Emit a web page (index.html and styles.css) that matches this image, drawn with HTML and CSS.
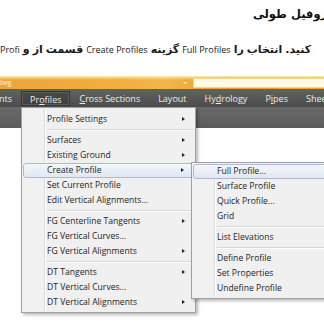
FILE: index.html
```html
<!DOCTYPE html>
<html lang="fa">
<head>
<meta charset="utf-8">
<link rel="stylesheet" href="styles.css">
</head>
<body>
<div class="doc">
  <div class="heading"><span>پروفیل طولی</span></div>
  <div class="instr">
    <span class="en">Profi</span>
    <span class="fa">و</span>
    <span class="fa">از</span>
    <span class="fa">قسمت</span>
    <span class="en">Create Profiles</span>
    <span class="fa">گزینه</span>
    <span class="en">Full Profiles</span>
    <span class="fa">را</span>
    <span class="fa">انتخاب</span>
    <span class="fa">کنید.</span>
  </div>
</div>
<div class="app">
  <div class="titlebar">
    <span class="tb-name">Drawing1.dwg</span>
    <span class="tb-arrow"></span>
    <div class="tb-box"></div>
  </div>
  <div class="menubar">
    <span class="mi first">Alignments</span>
    <span class="mi active">Pr<u>o</u>files</span>
    <span class="mi"><u>C</u>ross Sections</span>
    <span class="mi">Layout</span>
    <span class="mi">Hy<u>d</u>rology</span>
    <span class="mi">P<u>i</u>pes</span>
    <span class="mi">Sheets</span>
  </div>
  <div class="ribbon"></div>

  <div class="menu main">
    <div class="item sm">Profile Settings</div>
    <div class="sep"></div>
    <div class="item sm">Surfaces</div>
    <div class="item sm">Existing Ground</div>
    <div class="item sm hl">Create Profile</div>
    <div class="item">Set Current Profile</div>
    <div class="item">Edit Vertical Alignments...</div>
    <div class="sep"></div>
    <div class="item sm">FG Centerline Tangents</div>
    <div class="item">FG Vertical Curves...</div>
    <div class="item sm">FG Vertical Alignments</div>
    <div class="sep"></div>
    <div class="item sm">DT Tangents</div>
    <div class="item">DT Vertical Curves...</div>
    <div class="item sm">DT Vertical Alignments</div>
  </div>

  <div class="menu sub">
    <div class="item hl">Full Profile...</div>
    <div class="item">Surface Profile</div>
    <div class="item">Quick Profile...</div>
    <div class="item">Grid</div>
    <div class="sep"></div>
    <div class="item">List Elevations</div>
    <div class="sep"></div>
    <div class="item">Define Profile</div>
    <div class="item">Set Properties</div>
    <div class="item">Undefine Profile</div>
  </div>
</div>
</body>
</html>
```

FILE: styles.css
```css
html, body {
  margin: 0;
  padding: 0;
  background: #ffffff;
  overflow: hidden;
  width: 324px;
  height: 324px;
}

.doc {
  font-family: "Open Sans", "DejaVu Sans", sans-serif;
  color: #111;
}

.heading {
  display: flex;
  justify-content: flex-start;
  margin-top: 6px;
  margin-right: -8px;
  height: 17px;
  line-height: 17px;
  direction: rtl;
  font-family: "DejaVu Sans", sans-serif;
  font-weight: bold;
  font-size: 11.5px;
  white-space: nowrap;
}

.instr {
  display: flex;
  align-items: baseline;
  gap: 3px;
  margin-top: 19px;
  height: 16px;
  line-height: 16px;
  white-space: nowrap;
  color: #1a1a1a;
}
.instr .en {
  flex: none;
  font-family: "Open Sans", sans-serif;
  font-size: 9px;
}
.instr .fa {
  flex: none;
  direction: rtl;
  font-family: "DejaVu Sans", sans-serif;
  font-weight: bold;
  font-size: 11px;
}

.app {
  position: relative;
  margin-top: 18px;
  font-family: "Open Sans", sans-serif;
}

.titlebar {
  display: flex;
  align-items: center;
  height: 13px;
  background:
    linear-gradient(to bottom, rgba(255,240,190,0.9) 0, rgba(255,240,190,0) 4px),
    linear-gradient(to right, #eea43a 0, #f1ae3e 35%, #f3b64a 50%, #eda030 70%, #f3a822 100%);
}
.tb-name {
  width: 183px;
  margin-left: -35px;
  font-size: 7px;
  color: #fff4d8;
  line-height: 13px;
  white-space: nowrap;
}
.tb-arrow {
  width: 0;
  height: 0;
  margin-left: 35px;
  border-left: 2px solid transparent;
  border-right: 2px solid transparent;
  border-top: 2px solid #fff8e8;
}
.tb-box {
  flex: 1;
  height: 10px;
  margin-left: 6px;
  margin-right: -4px;
  background: #fffbe4;
  border: 1px solid #ecd792;
  box-sizing: border-box;
}

.menubar {
  display: flex;
  align-items: center;
  height: 18px;
  background: linear-gradient(to bottom, #626262, #4c4c4c);
  font-size: 9px;
  color: #ececec;
  white-space: nowrap;
}
.mi {
  padding: 0 9px;
  height: 15px;
  line-height: 15px;
  box-sizing: border-box;
}
.mi.first {
  margin-left: -44px;
}
.mi.active {
  padding: 0 8px;
  background: linear-gradient(to bottom, #4a4a4a, #3e3e3e);
  border: 1px solid #363636;
  box-shadow: inset 0 0 0 1px #5a5a5a;
}
.mi u {
  text-underline-offset: 1px;
}

.ribbon {
  height: 21px;
  background: linear-gradient(to bottom, #6a6a6a, #5c5c5c);
}

.menu {
  position: absolute;
  background:
    linear-gradient(to right, #f1f1f1 0, #f1f1f1 22px, #dcdcdc 22px, #dcdcdc 23px, #ffffff 23px, #ffffff 24px, #f0f0f0 24px);
  border: 1px solid #a0a0a0;
  box-shadow: 2px 2px 3px rgba(0,0,0,0.28);
  font-size: 8.6px;
  color: #1e1e1e;
  white-space: nowrap;
}
.menu.main {
  left: 21px;
  top: 31px;
  width: 173px;
  padding: 4px 0 2px;
}
.menu.sub {
  left: 191px;
  top: 86px;
  width: 150px;
  padding: 1px 0 2px;
}

.item {
  position: relative;
  height: 15px;
  line-height: 15px;
  padding-left: 25px;
}
.item.sm::after {
  content: "";
  position: absolute;
  right: 10px;
  top: 5px;
  border-top: 2.5px solid transparent;
  border-bottom: 2.5px solid transparent;
  border-left: 3px solid #222;
}
.item.hl {
  margin: 0 1px;
  padding-left: 23px;
  height: 15px;
  line-height: 13px;
  box-sizing: border-box;
  border: 1px solid #aebad0;
  border-radius: 3px;
  background: linear-gradient(to bottom, #f3f6fb, #e1e7f1);
}
.item.hl.sm::after {
  right: 9px;
  top: 4px;
}

.sep {
  height: 6px;
  margin-left: 25px;
  background: linear-gradient(to bottom, transparent 2px, #d7d7d7 2px, #d7d7d7 3px, #ffffff 3px, #ffffff 4px, transparent 4px);
}
```
